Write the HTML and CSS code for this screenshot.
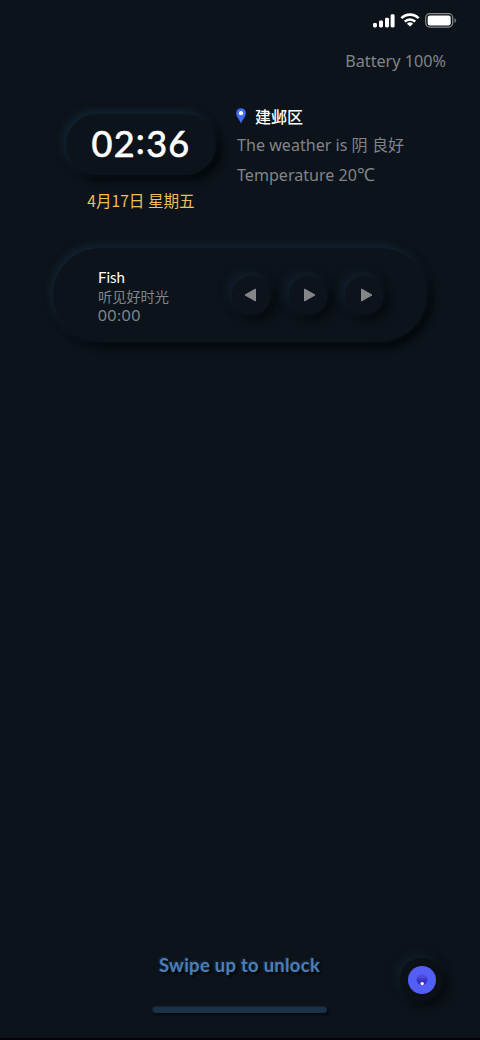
FILE: index.html
```html
<!DOCTYPE html>
<html lang="zh-CN">
<head>
<meta charset="utf-8">
<title>Lock screen</title>
<link rel="stylesheet" href="styles.css">
</head>
<body>
<main class="screen">
  <header class="status">
    <svg class="signal" width="22" height="14" viewBox="0 0 22 14" fill="#fff"><rect x="0" y="9" width="4" height="4.500" rx="1.400"/><rect x="6" y="6.500" width="4" height="7" rx="1.400"/><rect x="12" y="3.700" width="4" height="9.800" rx="1.400"/><rect x="17.600" y="0.300" width="4" height="13.200" rx="1.400"/></svg>
    <svg class="wifi" width="20" height="14" viewBox="0 0 20 14" fill="none" stroke="#fff" stroke-width="2.600"><path d="M1.400 5.200a12.200 12.200 0 0 1 17.200 0"/><path d="M4.800 8.600a7.400 7.400 0 0 1 10.400 0"/><path d="M10 13.600 6.900 10.700a4.600 4.600 0 0 1 6.200 0z" fill="#fff" stroke="none"/></svg>
    <svg class="battery" width="32" height="15" viewBox="0 0 32 15"><rect x=".7" y=".7" width="27" height="13.400" rx="4" fill="none" stroke="#85888c" stroke-width="1.200"/><rect x="2.700" y="2.400" width="23" height="10" rx="2.200" fill="#fff"/><path d="M29.400 5v5q1.800-1 1.800-2.500T29.400 5z" fill="#74777b"/></svg>
  </header>
  <div class="battery-text">Battery 100%</div>
  <section class="top">
    <div class="clock">
      <div class="time"><span>02</span><span class="colon">:</span><span>36</span></div>
      <div class="date">4月17日 星期五</div>
    </div>
    <div class="weather">
      <div class="place"><svg width="10" height="16" viewBox="0 0 10 16"><path d="M5 .2A4.800 4.800 0 0 0 .2 5C.2 9 3.600 11.500 5 15.600 6.400 11.500 9.800 9 9.800 5A4.800 4.800 0 0 0 5 .2z" fill="#416df5"/><circle cx="5" cy="5.200" r="2.100" fill="#fff"/></svg><span>建邺区</span></div>
      <div class="sky">The weather is 阴 良好</div>
      <div class="temp">Temperature 20<span class="unit">℃</span></div>
    </div>
  </section>
  <section class="player">
    <div class="track">
      <div class="song">Fish</div>
      <div class="artist">听见好时光</div>
      <div class="elapsed">00:00</div>
    </div>
    <div class="controls">
      <div class="key"><svg width="16" height="16" viewBox="0 0 16 16"><path d="M11.500 2v12L1 8z"/></svg></div>
      <div class="key"><svg width="16" height="16" viewBox="0 0 16 16"><path d="M4.500 2v12L15 8z"/></svg></div>
      <div class="key"><svg width="16" height="16" viewBox="0 0 16 16"><path d="M4.500 2v12L15 8z"/></svg></div>
    </div>
  </section>
  <footer class="bottom">
    <div class="unlock">Swipe up to unlock</div>
    <div class="home"></div>
  </footer>
  <div class="orb"><svg width="28" height="28" viewBox="0 0 28 28"><defs><linearGradient id="g" x2="0" y2="1"><stop offset="0" stop-color="#5551df"/><stop offset=".35" stop-color="#4b47d6"/><stop offset=".5" stop-color="#3a35c2"/><stop offset="1" stop-color="#332dba"/></linearGradient></defs><circle cx="14" cy="14" r="14" fill="#535ef6"/><circle cx="14" cy="13.500" r="5.500" fill="url(#g)"/><circle cx="14.200" cy="17.600" r="1.700" fill="#fff"/></svg></div>
</main>
</body>
</html>
```
FILE: styles.css
```css
* { box-sizing: border-box; }
body { margin: 0; background: #0c131a; }
.screen {
  position: relative;
  width: 480px;
  height: 1040px;
  overflow: hidden;
  display: flex;
  flex-direction: column;
  background: #0c131a;
  border-bottom: 2px solid #03030b;
  color: #828489;
  font-family: Lato, "Noto Sans CJK SC", sans-serif;
  white-space: nowrap;
}
.status {
  display: flex;
  justify-content: flex-end;
  height: 46px;
  padding: 13px 23px 0 0;
}
.signal { margin: 1px 5px 0 0; }
.wifi { margin: 0 5px 0 0; }
.battery-text {
  height: 30px;
  line-height: 31px;
  padding-right: 34px;
  text-align: right;
  font-family: "Noto Sans", sans-serif;
  font-size: 16.200px;
}
.top {
  display: flex;
  height: 172px;
  padding: 38px 0 0 66px;
  gap: 21px;
}
.clock { width: 150px; text-align: center; }
.time {
  display: flex;
  justify-content: center;
  height: 61px;
  line-height: 59px;
  border-radius: 31px;
  background: #0c131a;
  box-shadow: -3px -3px 8px #132535, 5px 5px 8px #04070a;
  color: #fff;
  font-size: 36px;
  font-weight: 400;
  letter-spacing: 1.300px;
  -webkit-text-stroke: .7px #fff;
}
.colon { margin-top: -3px; }
.date {
  margin-top: 12px;
  line-height: 26px;
  color: #f3bd59;
  font-family: "Noto Sans CJK SC", sans-serif;
  font-size: 15.600px;
}
.weather {
  margin-top: -13px;
  font-family: "Noto Sans", "Noto Sans CJK SC", sans-serif;
  font-size: 16.100px;
}
.place {
  display: flex;
  align-items: center;
  gap: 9px;
  height: 29px;
  margin-left: -1px;
  color: #fff;
  font-family: "Noto Sans CJK SC", sans-serif;
  font-size: 16px;
  font-weight: 500;
}
.sky, .temp { height: 29.500px; line-height: 31px; }
.unit { font-size: 18px; line-height: 1; }
.player {
  display: flex;
  align-items: center;
  width: 374px;
  height: 94px;
  margin-left: 53px;
  padding-left: 45px;
  border-radius: 47px;
  background: #0c131a;
  box-shadow: -2px -3px 8px #132637, 4px 4px 8px #030508;
}
.track { width: 134px; font-size: 14.200px; line-height: 19px; padding-top: 3px; }
.song { color: #fff; font-size: 15px; }
.elapsed { font-size: 15px; letter-spacing: .9px; }
.controls { display: flex; gap: 17.500px; }
.key {
  display: flex;
  align-items: center;
  justify-content: center;
  width: 39px;
  height: 39px;
  border-radius: 50%;
  background: #0c131a;
  box-shadow: -4px -4px 10px #101f2c, 5px 5px 10px #070b10;
}
.key path { fill: #85858a; stroke: #85858a; stroke-linejoin: round; }
.bottom {
  display: flex;
  flex-direction: column;
  align-items: center;
  margin-top: 608px;
  padding-right: 1px;
}
.unlock {
  height: 30px;
  line-height: 30px;
  color: #4b7db6;
  font-size: 18.500px;
  font-weight: 700;
  letter-spacing: .25px;
  text-shadow: -1px -1px 2px #183451, 2px 2px 2px #03070b;
}
.home {
  width: 174px;
  height: 6px;
  margin-top: 27px;
  border-radius: 3px;
  background: #1b3147;
  box-shadow: -1px -1px 2px #152538, 2px 2px 2px #060a0e;
}
.orb {
  position: absolute;
  left: 400px;
  top: 958px;
  display: flex;
  align-items: center;
  justify-content: center;
  width: 43px;
  height: 43px;
  border-radius: 50%;
  background: #0a1015;
  box-shadow: -4px -4px 10px #0f1d28, 5px 5px 9px #070b10;
}
```
